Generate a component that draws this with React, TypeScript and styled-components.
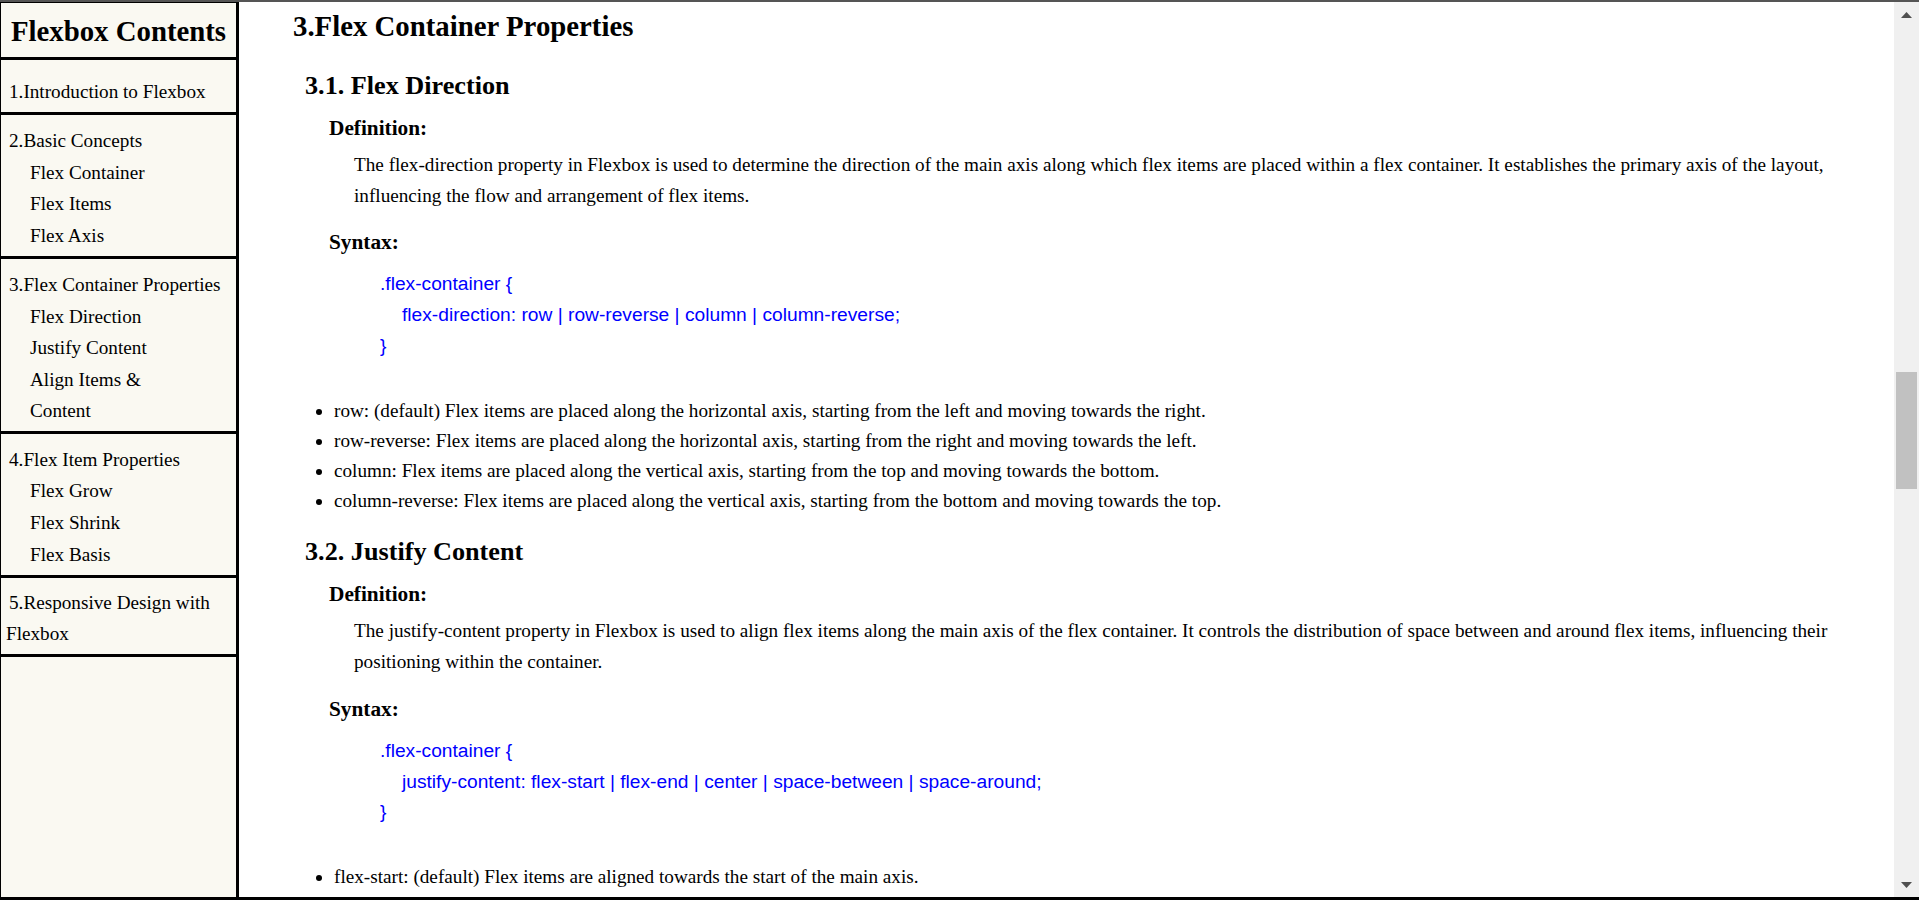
import React from "react";
import styled, { createGlobalStyle } from "styled-components";

const GlobalStyle = createGlobalStyle`
  html, body {
    margin: 0;
    padding: 0;
    overflow: hidden;
    background: #ffffff;
  }
  * { box-sizing: border-box; }
`;

const Frame = styled.div`
  height: 900px;
  width: 1919px;
  display: flex;
  border-top: 2px solid #555555;
  border-bottom: 3px solid #000000;
  font-family: "Liberation Serif", "Times New Roman", serif;
  color: #000;
  overflow: hidden;
`;

const Sidebar = styled.nav`
  width: 239px;
  flex: none;
  background: #faf9f2;
  border-left: 1px solid #000;
  border-top: 1px solid #000;
  border-right: 3px solid #000;
  display: flex;
  flex-direction: column;
`;

const SidebarTitle = styled.h2`
  margin: 0;
  padding-top: 2px;
  height: 57px;
  line-height: 52px;
  font-size: 28.8px;
  font-weight: bold;
  text-align: center;
  border-bottom: 3px solid #000;
`;

const TocSection = styled.ul<{ $top: number; $bottom: number }>`
  list-style: none;
  margin: 0;
  padding: ${(p) => p.$top}px 0 ${(p) => p.$bottom}px 5px;
  border-bottom: 3px solid #000;
`;

const TocItem = styled.li<{ $sub?: boolean }>`
  font-size: 19.2px;
  line-height: 30.3px;
  padding: 0.8px ${(p) => (p.$sub ? "40px" : "4px")} 0.8px ${(p) => (p.$sub ? "24px" : "0")};
  text-indent: ${(p) => (p.$sub ? "0" : "3px")};
`;

const Main = styled.main`
  flex: 1;
  min-width: 0;
  overflow: hidden;
  background: #fff;
  padding: 7px 30px 0 54px;
`;

const PageTitle = styled.h2`
  margin: 0;
  font-size: 28.8px;
  line-height: 34px;
  font-weight: bold;
`;

const TopicTitle = styled.h3<{ $first?: boolean }>`
  margin: ${(p) => (p.$first ? "27px" : "20px")} 0 0 12px;
  font-size: 26.2px;
  line-height: 32px;
  font-weight: bold;
`;

const Label = styled.h4<{ $gap: number }>`
  margin: ${(p) => p.$gap}px 0 0 36px;
  font-size: 21.3px;
  line-height: 28px;
  font-weight: bold;
`;

const Paragraph = styled.p`
  margin: 8px 0 0 61px;
  font-size: 19.2px;
  line-height: 1.6;
`;

const CodeBlock = styled.div`
  margin: 13px 0 0 87px;
  font-family: "Liberation Sans", Arial, sans-serif;
  font-size: 19.2px;
  line-height: 1.6;
  color: #0000ff;
`;

const CodeLine = styled.div<{ $indent?: boolean }>`
  padding-left: ${(p) => (p.$indent ? "22px" : "0")};
  white-space: pre;
`;

const BulletList = styled.ul`
  margin: 34px 0 0 0;
  padding-left: 41px;
  list-style: disc outside;
`;

const Bullet = styled.li`
  font-size: 19.2px;
  line-height: 30.2px;
`;

const ScrollBar = styled.div`
  width: 25px;
  flex: none;
  background: #f0f0f0;
  display: flex;
  flex-direction: column;
`;

const ArrowButton = styled.div`
  height: 25px;
  flex: none;
  display: flex;
  align-items: center;
  justify-content: center;
`;

const Track = styled.div`
  flex: 1;
  display: flex;
  flex-direction: column;
  align-items: center;
`;

const Thumb = styled.div<{ $offset: number; $size: number }>`
  margin-top: ${(p) => p.$offset}px;
  width: 21px;
  height: ${(p) => p.$size}px;
  background: #c1c1c1;
`;

const toc = [
  { top: 16, bottom: 4, items: [{ t: "1.Introduction to Flexbox" }] },
  {
    top: 10,
    bottom: 3.4,
    items: [
      { t: "2.Basic Concepts" },
      { t: "Flex Container", sub: true },
      { t: "Flex Items", sub: true },
      { t: "Flex Axis", sub: true },
    ],
  },
  {
    top: 10,
    bottom: 4,
    items: [
      { t: "3.Flex Container Properties" },
      { t: "Flex Direction", sub: true },
      { t: "Justify Content", sub: true },
      { t: "Align Items & Content", sub: true },
    ],
  },
  {
    top: 10,
    bottom: 3.4,
    items: [
      { t: "4.Flex Item Properties" },
      { t: "Flex Grow", sub: true },
      { t: "Flex Shrink", sub: true },
      { t: "Flex Basis", sub: true },
    ],
  },
  { top: 10, bottom: 4, items: [{ t: "5.Responsive Design with Flexbox" }] },
];

const topics = [
  {
    title: "3.1. Flex Direction",
    def: "The flex-direction property in Flexbox is used to determine the direction of the main axis along which flex items are placed within a flex container. It establishes the primary axis of the layout, influencing the flow and arrangement of flex items.",
    code: "flex-direction: row | row-reverse | column | column-reverse;",
    bullets: [
      "row: (default) Flex items are placed along the horizontal axis, starting from the left and moving towards the right.",
      "row-reverse: Flex items are placed along the horizontal axis, starting from the right and moving towards the left.",
      "column: Flex items are placed along the vertical axis, starting from the top and moving towards the bottom.",
      "column-reverse: Flex items are placed along the vertical axis, starting from the bottom and moving towards the top.",
    ],
  },
  {
    title: "3.2. Justify Content",
    def: "The justify-content property in Flexbox is used to align flex items along the main axis of the flex container. It controls the distribution of space between and around flex items, influencing their positioning within the container.",
    code: "justify-content: flex-start | flex-end | center | space-between | space-around;",
    bullets: [
      "flex-start: (default) Flex items are aligned towards the start of the main axis.",
    ],
  },
];

const Arrow = ({ down }: { down?: boolean }) => (
  <svg width="11" height="6" viewBox="0 0 11 6">
    <polygon points={down ? "0,0 11,0 5.5,6" : "0,6 11,6 5.5,0"} fill="#505050" />
  </svg>
);

export default function App() {
  return (
    <>
      <GlobalStyle />
      <Frame>
        <Sidebar>
          <SidebarTitle>Flexbox Contents</SidebarTitle>
          {toc.map((sec, i) => (
            <TocSection key={i} $top={sec.top} $bottom={sec.bottom}>
              {sec.items.map((it, j) => (
                <TocItem key={j} $sub={(it as any).sub}>
                  {it.t}
                </TocItem>
              ))}
            </TocSection>
          ))}
        </Sidebar>
        <Main>
          <PageTitle>3.Flex Container Properties</PageTitle>
          {topics.map((tp, i) => (
            <section key={i}>
              <TopicTitle $first={i === 0}>{tp.title}</TopicTitle>
              <Label $gap={12}>Definition:</Label>
              <Paragraph>{tp.def}</Paragraph>
              <Label $gap={17}>Syntax:</Label>
              <CodeBlock>
                <CodeLine>.flex-container {"{"}</CodeLine>
                <CodeLine $indent>{tp.code}</CodeLine>
                <CodeLine>{"}"}</CodeLine>
              </CodeBlock>
              <BulletList>
                {tp.bullets.map((b, k) => (
                  <Bullet key={k}>{b}</Bullet>
                ))}
              </BulletList>
            </section>
          ))}
        </Main>
        <ScrollBar>
          <ArrowButton>
            <Arrow />
          </ArrowButton>
          <Track>
            <Thumb $offset={345} $size={117} />
          </Track>
          <ArrowButton>
            <Arrow down />
          </ArrowButton>
        </ScrollBar>
      </Frame>
    </>
  );
}
